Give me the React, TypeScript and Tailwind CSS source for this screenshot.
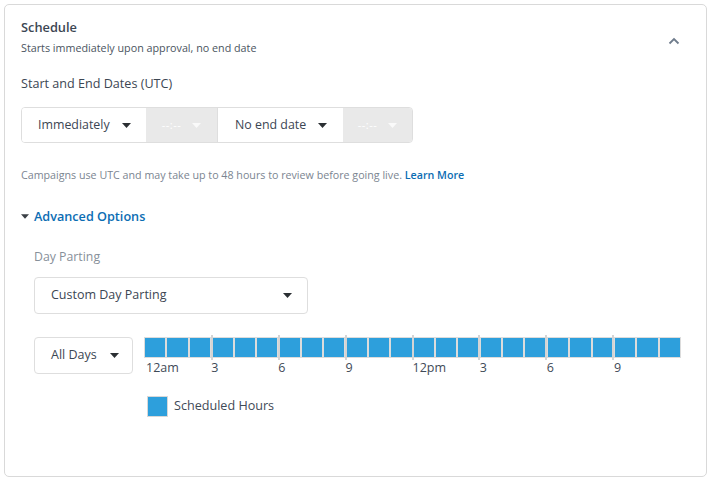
import React from "react";

const FONT = { fontFamily: '"Open Sans", "Noto Sans", Arial, sans-serif' };

function Caret({ className = "" }: { className?: string }) {
  return (
    <svg width="9" height="5" viewBox="0 0 9 5" className={className}>
      <path d="M0 0 H9 L4.5 5 Z" fill="currentColor" />
    </svg>
  );
}

const hourLabels = ["12am", "3", "6", "9", "12pm", "3", "6", "9"];

function HourGrid() {
  return (
    <div className="w-[537px]">
      <div className="relative h-[21px] flex border border-[#dcdcdc] bg-[#dcdcdc] gap-[2px]">
        {Array.from({ length: 24 }).map((_, i) => (
          <div key={i} className="flex-1 bg-[#2d9fdc]" />
        ))}
        {[1, 2, 3, 4, 5, 6, 7].map((i) => (
          <div
            key={i}
            className="absolute top-[-3px] bottom-[-3px] w-[2px] bg-[#d4d4d4]"
            style={{ left: `calc(${(i * 100) / 8}% - 1px)` }}
          />
        ))}
      </div>
      <div className="grid grid-cols-8 mt-[2px] text-[12.5px] leading-[16px] text-[#3f4a57]">
        {hourLabels.map((l, i) => (
          <span key={i} className={i === 0 ? "pl-[2px]" : ""}>
            {l}
          </span>
        ))}
      </div>
    </div>
  );
}

export default function App() {
  return (
    <div className="w-[710px] h-[480px] bg-white p-[4px]" style={FONT}>
      <div className="w-[703px] h-[473px] border border-[#d9d9d9] rounded-[5px] pl-[16px] pr-[16px] pt-[13px]">
        {/* header */}
        <div className="flex items-start justify-between">
          <div>
            <div className="text-[12.8px] leading-[18px] font-semibold text-[#3c4653]">Schedule</div>
            <div className="mt-[4px] text-[10.75px] leading-[16px] text-[#4a5460]">
              Starts immediately upon approval, no end date
            </div>
          </div>
          <svg width="12" height="8" viewBox="0 0 12 8" className="mt-[19px] mr-[10px] text-[#6f7c8c]">
            <path d="M1.5 6.5 L6 2 L10.5 6.5" fill="none" stroke="currentColor" strokeWidth="1.8" />
          </svg>
        </div>

        <div className="mt-[19px] text-[12.6px] leading-[18px] text-[#3c4653]">Start and End Dates (UTC)</div>

        {/* start / end date control */}
        <div className="mt-[14px] flex w-[392px] h-[36px] border border-[#dedede] rounded-[4px] overflow-hidden text-[12.4px] text-[#3c4653]">
          <div className="w-[124px] flex items-center pl-[16px] gap-[12px] bg-white">
            <span>Immediately</span>
            <Caret className="text-[#2b2f33]" />
          </div>
          <div className="w-[71px] flex items-center justify-center gap-[11px] bg-[#e9e9e9] text-white">
            <span className="text-[11px] tracking-[0.5px]">--:--</span>
            <Caret className="text-[#fafafa]" />
          </div>
          <div className="w-[126px] flex items-center pl-[17px] gap-[12px] bg-white border-l border-[#dedede]">
            <span>No end date</span>
            <Caret className="text-[#2b2f33]" />
          </div>
          <div className="flex-1 flex items-center justify-center gap-[11px] bg-[#e9e9e9] text-white">
            <span className="text-[11px] tracking-[0.5px]">--:--</span>
            <Caret className="text-[#fafafa]" />
          </div>
        </div>

        <div className="mt-[24px] text-[10.7px] leading-[16px] text-[#7b8591]">
          Campaigns use UTC and may take up to 48 hours to review before going live.{" "}
          <span className="font-semibold text-[#0b6db3]">Learn More</span>
        </div>

        <div className="mt-[24px] flex items-center gap-[5px]">
          <Caret className="text-[#3a3f45] w-[8px]" />
          <span className="text-[12.65px] leading-[18px] font-semibold text-[#0b6db3]">Advanced Options</span>
        </div>

        {/* advanced options */}
        <div className="pl-[13px]">
          <div className="mt-[24px] text-[12.3px] leading-[16px] text-[#87909a]">Day Parting</div>

          <div className="mt-[12px] w-[274px] h-[37px] border border-[#dedede] rounded-[4px] flex items-center justify-between pl-[16px] pr-[15px] text-[12.5px] text-[#3c4653]">
            <span>Custom Day Parting</span>
            <Caret className="text-[#2b2f33]" />
          </div>

          <div className="mt-[23px] flex items-start gap-[11px]">
            <div className="w-[99px] h-[37px] border border-[#dedede] rounded-[4px] flex items-center pl-[16px] gap-[13px] text-[12.5px] text-[#3c4653]">
              <span>All Days</span>
              <Caret className="text-[#2b2f33]" />
            </div>
            <HourGrid />
          </div>

          <div className="mt-[20px] ml-[113px] flex items-center gap-[6px]">
            <div className="w-[21px] h-[21px] bg-[#2d9fdc] border border-[#d8d8d8]" />
            <span className="text-[12.6px] text-[#3f4a57]">Scheduled Hours</span>
          </div>
        </div>
      </div>
    </div>
  );
}
